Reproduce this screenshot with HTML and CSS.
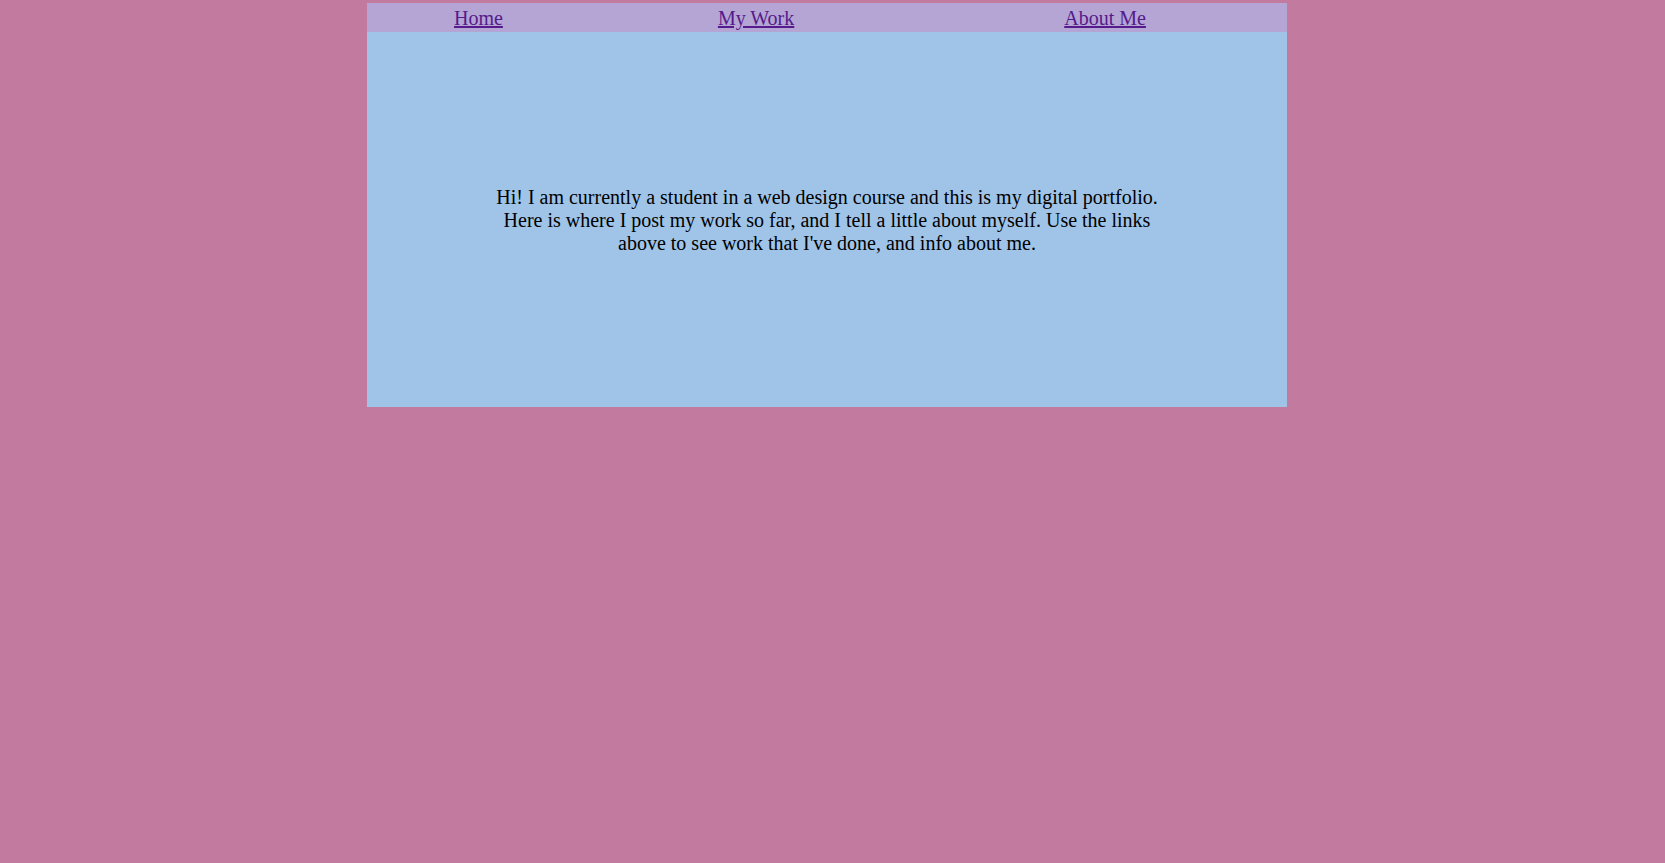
FILE: index.html
```html
<!DOCTYPE html>
<html>
<head>
<meta charset="utf-8">
<title>Portfolio</title>
<link rel="stylesheet" href="styles.css">
</head>
<body>
<div class="page">
  <nav class="nav">
    <a class="nav-link home" href="#">Home</a>
    <a class="nav-link work" href="#">My Work</a>
    <a class="nav-link about" href="#">About Me</a>
  </nav>
  <main class="main">
    <p class="intro">Hi! I am currently a student in a web design course and this is my digital portfolio. Here is where I post my work so far, and I tell a little about myself. Use the links above to see work that I've done, and info about me.</p>
  </main>
</div>
</body>
</html>
```

FILE: styles.css
```css
html, body {
  margin: 0;
  padding: 0;
}
body {
  background: #c27a9e;
  font-family: "Liberation Serif", "Times New Roman", serif;
  font-size: 20px;
}
.page {
  width: 920px;
  margin: 3px 0 0 367px;
}
.nav {
  box-sizing: border-box;
  display: flex;
  align-items: flex-start;
  height: 29px;
  padding-top: 4px;
  background: #b5a5d4;
  line-height: 23px;
}
.nav-link {
  color: #551a8b;
  text-decoration: underline;
}
.home { margin-left: 87px; }
.work { margin-left: 215px; }
.about { margin-left: 270px; }
.main {
  box-sizing: border-box;
  height: 375px;
  padding-top: 2px;
  background: #9fc4e8;
  display: flex;
  align-items: center;
  justify-content: center;
}
.intro {
  margin: 0;
  width: 680px;
  text-align: center;
  line-height: 23px;
  color: #000;
}
```
